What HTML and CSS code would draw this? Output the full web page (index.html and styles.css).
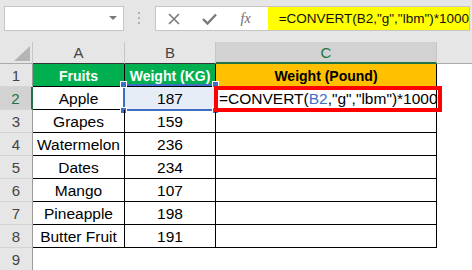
FILE: index.html
```html
<!DOCTYPE html>
<html lang="en">
<head>
    <meta charset="UTF-8">
    <title>Convert Formula</title>
    <link rel="stylesheet" href="styles.css">
</head>
<body>
<div class="formula-bar">
    <div class="name-box">
        <svg class="caret" width="8" height="5" viewBox="0 0 8 5"><polygon points="0,0 8,0 4,4" fill="#7a7a7a"/></svg>
    </div>
    <div class="dots">
        <svg width="3" height="13" viewBox="0 0 3 13">
            <rect x="0" y="0" width="2" height="2" fill="#b0b0b0"/>
            <rect x="0" y="5" width="2" height="2" fill="#b0b0b0"/>
            <rect x="0" y="10" width="2" height="2" fill="#b0b0b0"/>
        </svg>
    </div>
    <div class="formula-box">
        <div class="tools">
            <span class="tool">
                <svg width="12" height="12" viewBox="0 0 12 12"><path d="M1 1 L11 11 M11 1 L1 11" stroke="#7a7a7a" stroke-width="1.6"/></svg>
            </span>
            <span class="tool">
                <svg width="15" height="12" viewBox="0 0 15 12"><path d="M1 6 L5.5 10.5 L14 1.5" stroke="#7a7a7a" stroke-width="2.4" fill="none"/></svg>
            </span>
            <span class="tool fx">fx</span>
        </div>
        <div class="formula-text">=CONVERT(B2,"g","lbm")*1000</div>
    </div>
</div>

<div class="sheet">
    <!-- column headers -->
    <div class="corner">
        <svg width="32" height="21" viewBox="0 0 32 21"><polygon points="14,19 30,19 30,4" fill="#b5b5b5"/></svg>
    </div>
    <div class="col-head dark-line">A</div>
    <div class="col-head dark-line">B</div>
    <div class="col-head active">C</div>
    <div class="col-head last"></div>

    <!-- row 1 -->
    <div class="row-head">1</div>
    <div class="cell title green">Fruits</div>
    <div class="cell title green">Weight (KG)</div>
    <div class="cell title orange">Weight (Pound)</div>
    <div class="blank"></div>

    <!-- row 2 -->
    <div class="row-head active">2</div>
    <div class="cell">Apple</div>
    <div class="cell picked">187<span class="ref-box"><i class="h tl"></i><i class="h tr"></i><i class="h bl"></i><i class="h br"></i></span></div>
    <div class="cell editing">=CONVERT(<span class="ref">B2</span>,"g","lbm")*1000<span class="red-box"></span></div>
    <div class="blank"></div>

    <div class="row-head">3</div>
    <div class="cell">Grapes</div>
    <div class="cell">159</div>
    <div class="cell"></div>
    <div class="blank"></div>

    <div class="row-head">4</div>
    <div class="cell">Watermelon</div>
    <div class="cell">236</div>
    <div class="cell"></div>
    <div class="blank"></div>

    <div class="row-head">5</div>
    <div class="cell">Dates</div>
    <div class="cell">234</div>
    <div class="cell"></div>
    <div class="blank"></div>

    <div class="row-head">6</div>
    <div class="cell">Mango</div>
    <div class="cell">107</div>
    <div class="cell"></div>
    <div class="blank"></div>

    <div class="row-head">7</div>
    <div class="cell">Pineapple</div>
    <div class="cell">198</div>
    <div class="cell"></div>
    <div class="blank"></div>

    <div class="row-head">8</div>
    <div class="cell">Butter Fruit</div>
    <div class="cell">191</div>
    <div class="cell"></div>
    <div class="blank"></div>

    <div class="row-head">9</div>
    <div class="blank"></div>
    <div class="blank"></div>
    <div class="blank"></div>
    <div class="blank"></div>
</div>
</body>
</html>
```

FILE: styles.css
```css
body {
    margin: 0;
    font-family: 'Liberation Sans', Arial, sans-serif;
    background-color: #fff;
    width: 472px;
    height: 270px;
    overflow: hidden;
}

/* formula bar */
.formula-bar {
    display: flex;
    height: 42px;
    box-sizing: border-box;
    padding: 6px 2px 0 4px;
    background-color: #e6e6e6;
}

.name-box {
    width: 120px;
    height: 25px;
    box-sizing: border-box;
    background-color: #fff;
    border: 1px solid #c6c6c6;
    display: flex;
    align-items: center;
    justify-content: flex-end;
    padding-right: 6px;
}

.dots {
    width: 31px;
    height: 25px;
    display: flex;
    align-items: center;
    justify-content: center;
}

.formula-box {
    flex: 1;
    height: 25px;
    box-sizing: border-box;
    display: flex;
    background-color: #fff;
    border: 1px solid #c6c6c6;
}

.tools {
    width: 112px;
    display: flex;
}

.tool {
    width: 36px;
    display: flex;
    align-items: center;
    justify-content: center;
}

.fx {
    font-family: 'Liberation Serif', serif;
    font-style: italic;
    font-size: 14px;
    color: #6a6a6a;
}

.formula-text {
    flex: 1;
    background-color: #ffff00;
    font-size: 13.5px;
    line-height: 23px;
    padding-left: 11px;
    color: #111;
    white-space: nowrap;
}

/* sheet grid */
.sheet {
    display: grid;
    grid-template-columns: 33px 92px 91px 221px 1fr;
    grid-template-rows: 22px repeat(9, 23px);
    font-size: 15.5px;
}

.corner {
    background-color: #e6e6e6;
    border-right: 1px solid #c6c6c6;
    border-bottom: 1px solid #ababab;
}

.corner svg {
    display: block;
}

.col-head {
    background-color: #e6e6e6;
    color: #444;
    font-size: 15px;
    text-align: center;
    line-height: 18px;
    padding-top: 2px;
    box-sizing: border-box;
    border-right: 1px solid #c6c6c6;
    border-bottom: 1px solid #ababab;
}

.col-head.dark-line {
    border-bottom-color: #333;
}

.col-head.active {
    background-color: #d2d2d2;
    color: #217346;
    border-bottom: 2px solid #217346;
}

.col-head.last {
    border-right: none;
}

.row-head {
    background-color: #e6e6e6;
    color: #444;
    font-size: 15px;
    text-align: center;
    line-height: 18px;
    padding-top: 3px;
    box-sizing: border-box;
    border-right: 1px solid #9b9b9b;
    border-bottom: 1px solid #d4d4d4;
}

.row-head.active {
    background-color: #d2d2d2;
    color: #217346;
    border-right: 2px solid #217346;
}

.cell {
    position: relative;
    box-sizing: border-box;
    border-right: 1px solid #000;
    border-bottom: 1px solid #000;
    text-align: center;
    line-height: 18px;
    padding-top: 3px;
    color: #000;
    white-space: nowrap;
}

.title {
    font-weight: bold;
    font-size: 14px;
}

.green {
    background-color: #00b050;
    color: #fff;
}

.orange {
    background-color: #ffc000;
}

.picked {
    background-color: #e6edf7;
}

.editing {
    text-align: left;
    padding-left: 3px;
    z-index: 1;
}

.ref {
    color: #3c6fc4;
}

.ref-box {
    position: absolute;
    left: -2px;
    right: -1px;
    top: -3px;
    bottom: -2px;
    border: 2px solid #3c6fc4;
}

.h {
    position: absolute;
    width: 5px;
    height: 5px;
    background-color: #3c6fc4;
    border: 1px solid #fff;
}

.tl { left: -5px; top: -5px; }
.tr { right: -5px; top: -5px; }
.bl { left: -5px; bottom: -5px; }
.br { right: -5px; bottom: -5px; }

.red-box {
    position: absolute;
    left: -2px;
    right: -6px;
    top: -1px;
    bottom: -3px;
    border: 4px solid #ff0000;
}

.blank {
    background-color: #fff;
}
```
